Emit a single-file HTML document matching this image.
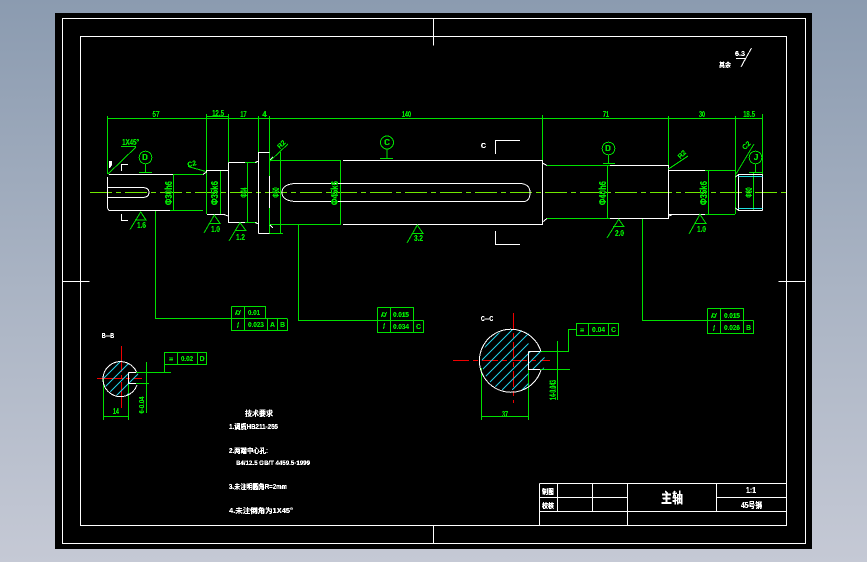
<!DOCTYPE html>
<html><head><meta charset="utf-8"><style>
html,body{margin:0;padding:0;width:867px;height:562px;overflow:hidden;background:linear-gradient(180deg,#8b9bb0 0%,#a9b3c3 50%,#c5c9d5 100%)}
svg{position:absolute;left:0;top:0;display:block}
text{font-family:"Liberation Sans","Noto Sans CJK SC",sans-serif;font-weight:bold}
.g{fill:none;stroke:#00e000;stroke-width:1}
.w{fill:none;stroke:#fff;stroke-width:1}
.t{fill:#00e000;font-size:7px;text-anchor:middle}
.s{fill:#fff;font-size:7px}
</style></head><body>
<svg width="867" height="562" viewBox="0 0 867 562" shape-rendering="crispEdges">
<defs><clipPath id="cb"><path d="M103 360h25.500v12.500h11v11h-11v16h-25.500z"/></clipPath><clipPath id="cc"><path d="M480 328h48.500v23.500h20v18h-20v24h-48.500z"/></clipPath>
<clipPath id="cbc"><circle cx="121.300" cy="378.300" r="17.500"/></clipPath><clipPath id="ccc"><circle cx="513.300" cy="360.800" r="31.500"/></clipPath>
<filter id="th" filterUnits="userSpaceOnUse" x="0" y="0" width="867" height="562" color-interpolation-filters="sRGB"><feComponentTransfer><feFuncA type="discrete" tableValues="0 1 1 1"/></feComponentTransfer></filter></defs>
<rect x="55" y="13" width="757" height="536" fill="#000"/>
<path class="w" d="M62.500 18.500H805.500V543.500H62.500zM80.500 36.500H786.500V525.500H80.500zM433.500 18.500V45.500M433.500 525.500V543.500M62.500 281.500H89.500M778.500 281.500H805.500"/>
<path class="w" d="M539.500 483.500H786.500M539.500 497.500H627.500M716.500 497.500H786.500M539.500 511.500H786.500M539.500 483.500V525.500M557.500 483.500V511.500M592.500 483.500V511.500M627.500 483.500V525.500M716.500 483.500V511.500"/>
<path d="M90 192.500H790" stroke="#70e800" fill="none" stroke-dasharray="22 4 5 4"/>
<path class="g" d="M107.500 116V174M107.500 118.500H762.500M206.500 114V214M228.500 114V162M258.500 116V152M269.500 116V233M542.500 115V160M668.500 116V166M735.500 116V214M762.500 114V210M206.500 116.500H228.500M170 174.500H203M170 210.500H203M173.500 174.500V210.500M220.500 170V214M245 162.500H257M245 222.500H257M247.500 162.500V222.500M270 160.500H341M270 224.500H341M280.500 152V233M268 233.500H283M340.500 160.500V224.500M547 165.500H610M547 218.500H610M607.500 165.500V218.500M705 170.500H735M705 214.500H735M708.500 170.500V214.500M753.500 172V210"/>
<path class="w" d="M107.500 177V208L109 210.500H170M109 174.500H170M108 187.500H143M108 197.500H143M170 174.500H173M203 174.500L206.500 172V170.500H228.500M207 214.500H224L228 216M228.500 162.500V222.500H245M228.500 162.500H245M255 162.500L258.500 161M255 222.500L258.500 224M258.500 152V233.500M258.500 152.500H269.500M258.500 233.500H269.500M269.500 176V208M270 160L273 157M270 225L273 228M343 160.500H542.500V224.500H343M542.500 160.500V224.500M542.500 163L547 165.500M542.500 222L547 218.500M610 165.500H668.500V218.500H610M668.500 165.500V218.500M668.500 170.500H705M668.500 214.500H705M668.500 216L672 215M735.500 177L738.500 174.500M735.500 208L738.500 210.500M738.500 174.500H762.500M738.500 210.500H762.500M738.500 174.500V210.500M762.500 174.500V210.500M296 183.500H520M296 201.500H524"/>
<path d="M738.500 176.500H762.500M738.500 208.500H762.500" stroke="#20e0e0" fill="none"/>
<path class="w" d="M121.500 171V164.500H128M121.500 214V220.500H128M495.500 154V140.500H520M495.500 231V244.500H520"/>
<path d="M109 161H112V165L110 168H109z" fill="#fff"/>
<path class="g" d="M155.500 211V318.500H287M298.500 225V320.500H423.500M642.500 219V320.500H753.500"/>
<path class="g" d="M231.500 306.500H265.500V318.500M231.500 306.500V330.500H287.500V318.500M244.500 306.500V330.500M267.500 318.500V330.500M277.500 318.500V330.500"/>
<path class="g" d="M377.500 307.500H413.500V320.500M377.500 307.500V332.500H423.500V320.500M390.500 307.500V332.500M413.500 320.500V332.500"/>
<path class="g" d="M707.500 308.500H743.500V320.500M707.500 308.500V333.500H753.500V320.500M720.500 308.500V333.500M743.500 320.500V333.500"/>
<path class="g" d="M164.500 352.500H206.500V364.500H164.500zM177.500 352.500V364.500M197.500 352.500V364.500M164.500 364.500V373M128.500 372.500H171M128.500 383.500H149M146.500 362V413M103.500 378V420M128.500 383V420M103.500 416.500H128.500"/>
<path class="g" d="M576.500 323.500H618.500V335.500H576.500zM588.500 323.500V335.500M608.500 323.500V335.500M576.500 329.500H568.500V351.500H528.500M528.500 369.500H570M557.500 341V400M481.500 368V420M528.500 369V420M481.500 416.500H528.500"/>
<path d="M97 378.500H142M121.500 346V410" stroke="#f00000" fill="none" stroke-dasharray="26 3 4 3"/>
<path d="M453 360.500H550M513.500 313V403" stroke="#f00000" fill="none" stroke-dasharray="16 4 5 4"/>
<path class="w" d="M143 187.500Q149 188 149 192.500Q149 197 143 197.500M296 183.500Q282 184 282 192.500Q282 201 296 201.500M520 183.500Q530 184 530 192.500Q530 201 524 201.500"/>
<g clip-path="url(#cb)"><g clip-path="url(#cbc)" stroke="#20c8e0" stroke-width="1">
<path d="M100 382L124 358M100 392L134 358M102 400L142 360M110 402L142 370M118 404L142 380"/></g></g>
<path class="w" d="M128.500 372.500V383.500H136M128.500 372.500H136M136.500 372A17.500 17.500 0 1 0 137 385"/>
<g clip-path="url(#cc)"><g clip-path="url(#ccc)" stroke="#20c8e0" stroke-width="1">
<path d="M480 352L505 327M480 362L516 326M480 372L528 324M480 382L540 322M484 388L550 322M492 390L552 330M502 390L552 340M512 390L552 350M522 390L552 360M532 390L552 370"/></g></g>
<path class="w" d="M528.500 351.500V369.500H540M528.500 351.500H540M541 351.500A31.500 31.500 0 1 0 541 370"/>
<g class="g">
<circle cx="145.500" cy="157.500" r="6.300"/><path d="M145.500 164V172.500M139 172.500H152"/>
<circle cx="387" cy="142.500" r="6.500"/><path d="M387 149V158.500M380 158.500H393"/>
<circle cx="608.500" cy="148.500" r="6.300"/><path d="M608.500 155V163.500M603 163.500H615"/>
<circle cx="755.500" cy="157.500" r="6.300"/><path d="M755.500 164V172.500M749 172.500H762"/>
<path d="M108 174L136 147M121 146.500H136M270 161L288 144"/>
<path d="M188 166.500L206 171.500M668.500 169L688 156M736 174L754 144"/>
<path d="M130 229.500L140.700 212L146 220H135M204 233L214.300 215L220 223.500H209M229 241L240 222.700L246 230.700H235M407 243L417.300 225L423 233.500H412M607 238L618.700 219.300L624 226.700H613M689 234L700 214.300L706 223.500H695"/>
</g>
<path class="w" d="M736 58.500H745.500L741 67L751.500 48"/>
<g filter="url(#th)">
<g class="t">
<text x="156" y="117" font-size="8" textLength="7" lengthAdjust="spacingAndGlyphs">57</text><text x="218" y="116" font-size="8" textLength="12" lengthAdjust="spacingAndGlyphs">12.5</text><text x="243.500" y="117" font-size="8" textLength="6" lengthAdjust="spacingAndGlyphs">17</text><text x="264.500" y="117" font-size="8">4</text>
<text x="406.500" y="117" font-size="8" textLength="9" lengthAdjust="spacingAndGlyphs">140</text><text x="606" y="117" font-size="8" textLength="6" lengthAdjust="spacingAndGlyphs">71</text><text x="702" y="117" font-size="8" textLength="6" lengthAdjust="spacingAndGlyphs">30</text><text x="749" y="117" font-size="8" textLength="12" lengthAdjust="spacingAndGlyphs">18.5</text>
<text x="130.500" y="145" font-size="8" textLength="17" lengthAdjust="spacingAndGlyphs">1X45°</text><text x="192.500" y="166" transform="rotate(-15 192.500 166)" font-size="7">C2</text>
<text x="283" y="146" transform="rotate(-45 283 146)" font-size="7">R2</text><text x="683.500" y="156" transform="rotate(-45 683.500 156)" font-size="7">R2</text><text x="748" y="147" transform="rotate(-45 748 147)" font-size="7">C2</text>
<text x="145" y="160" font-size="8">D</text><text x="387" y="145" font-size="8">C</text><text x="608" y="151" font-size="8">D</text><text x="756" y="160" font-size="8">J</text>
<text x="141.500" y="228" font-size="8" textLength="9" lengthAdjust="spacingAndGlyphs">1.6</text><text x="215.500" y="232" font-size="8" textLength="9" lengthAdjust="spacingAndGlyphs">1.0</text><text x="240.500" y="240" font-size="8" textLength="9" lengthAdjust="spacingAndGlyphs">1.2</text><text x="418.500" y="241" font-size="8" textLength="9" lengthAdjust="spacingAndGlyphs">3.2</text><text x="619.500" y="236" font-size="8" textLength="9" lengthAdjust="spacingAndGlyphs">2.0</text><text x="701.500" y="232" font-size="8" textLength="9" lengthAdjust="spacingAndGlyphs">1.0</text>
<text x="172" y="193" transform="rotate(-90 172 193)" font-size="10" textLength="24" lengthAdjust="spacingAndGlyphs">Φ30h6</text>
<text x="218" y="193" transform="rotate(-90 218 193)" font-size="10" textLength="24" lengthAdjust="spacingAndGlyphs">Φ35k6</text>
<text x="247" y="192.500" transform="rotate(-90 247 192.500)" font-size="9" textLength="10" lengthAdjust="spacingAndGlyphs">Φ44</text>
<text x="279" y="192.500" transform="rotate(-90 279 192.500)" font-size="9" textLength="10" lengthAdjust="spacingAndGlyphs">Φ50</text>
<text x="338" y="193" transform="rotate(-90 338 193)" font-size="10" textLength="24" lengthAdjust="spacingAndGlyphs">Φ45k6</text>
<text x="606" y="193" transform="rotate(-90 606 193)" font-size="10" textLength="24" lengthAdjust="spacingAndGlyphs">Φ40h6</text>
<text x="707" y="193" transform="rotate(-90 707 193)" font-size="10" textLength="24" lengthAdjust="spacingAndGlyphs">Φ35k6</text>
<text x="752" y="192.500" transform="rotate(-90 752 192.500)" font-size="9" textLength="10" lengthAdjust="spacingAndGlyphs">Φ30</text>
<text x="254" y="315" textLength="12" lengthAdjust="spacingAndGlyphs">0.01</text><text x="238" y="328" font-size="8">/</text><text x="256" y="327" textLength="16" lengthAdjust="spacingAndGlyphs">0.023</text><text x="272.500" y="327">A</text><text x="282.500" y="327">B</text>
<text x="238" y="315" font-size="8">⌭</text>
<text x="401" y="317" textLength="16" lengthAdjust="spacingAndGlyphs">0.015</text><text x="384" y="329" font-size="8">/</text><text x="401" y="329" textLength="16" lengthAdjust="spacingAndGlyphs">0.034</text><text x="418.500" y="329">C</text><text x="384" y="317" font-size="8">⌭</text>
<text x="732" y="318" textLength="16" lengthAdjust="spacingAndGlyphs">0.015</text><text x="714" y="331" font-size="8">/</text><text x="732" y="330" textLength="16" lengthAdjust="spacingAndGlyphs">0.026</text><text x="748.500" y="330">B</text><text x="714" y="318" font-size="8">⌭</text>
<text x="171" y="362" font-size="8">≡</text><text x="187" y="361" textLength="12" lengthAdjust="spacingAndGlyphs">0.02</text><text x="202" y="361">D</text>
<text x="582" y="333" font-size="8">≡</text><text x="598.500" y="332" textLength="13" lengthAdjust="spacingAndGlyphs">0.04</text><text x="613.500" y="332">C</text>
<text x="116" y="414" font-size="8" textLength="6" lengthAdjust="spacingAndGlyphs">14</text><text x="505" y="417" font-size="8" textLength="6" lengthAdjust="spacingAndGlyphs">37</text>
<text x="144" y="405" transform="rotate(-90 144 405)" textLength="17" lengthAdjust="spacingAndGlyphs">6-0.04</text>
<text x="556" y="390" transform="rotate(-90 556 390)" font-size="9" textLength="20" lengthAdjust="spacingAndGlyphs">14-0.043</text>
</g>
<g class="s">
<text x="481" y="148" font-size="7">C</text>
<text x="102" y="338" textLength="12" lengthAdjust="spacingAndGlyphs">B—B</text><text x="481" y="321" textLength="12" lengthAdjust="spacingAndGlyphs">C—C</text>
<text x="719" y="67" font-size="6.500" textLength="12" lengthAdjust="spacingAndGlyphs">其余</text><text x="735" y="56" font-size="7.500" textLength="10" lengthAdjust="spacingAndGlyphs">6.3</text>
<text x="245" y="416" font-size="7.500" textLength="28" lengthAdjust="spacingAndGlyphs">技术要求</text>
<text x="229" y="429" font-size="7" textLength="49" lengthAdjust="spacingAndGlyphs">1.调质HB211-255</text>
<text x="229" y="453" font-size="7" textLength="39" lengthAdjust="spacingAndGlyphs">2.两端中心孔:</text>
<text x="236" y="465" font-size="6.500" textLength="74" lengthAdjust="spacingAndGlyphs">B4/12.5 GB/T 4459.5-1999</text>
<text x="229" y="489" font-size="7" textLength="58" lengthAdjust="spacingAndGlyphs">3.未注明圆角R=2mm</text>
<text x="229" y="513" font-size="7" textLength="64" lengthAdjust="spacingAndGlyphs">4.未注倒角为1X45°</text>
<text x="542" y="494" font-size="7" textLength="12" lengthAdjust="spacingAndGlyphs">制图</text><text x="542" y="508" font-size="7" textLength="12" lengthAdjust="spacingAndGlyphs">校核</text>
<text x="661" y="503" font-size="14" textLength="22" lengthAdjust="spacingAndGlyphs">主轴</text>
<text x="746" y="493" font-size="8" textLength="10" lengthAdjust="spacingAndGlyphs">1:1</text><text x="741" y="508" font-size="8" textLength="21" lengthAdjust="spacingAndGlyphs">45号钢</text>
</g>
</g>
</svg>
</body></html>
